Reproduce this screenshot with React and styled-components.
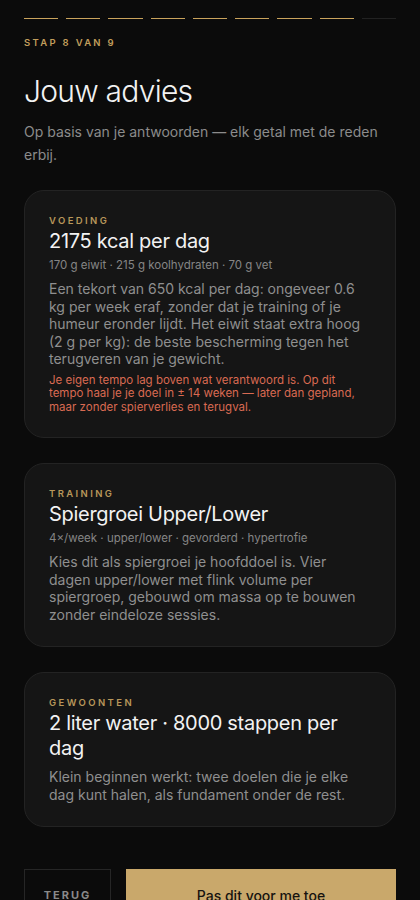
import styled, { createGlobalStyle } from "styled-components";

const GlobalStyle = createGlobalStyle`
  * { box-sizing: border-box; }
  body {
    margin: 0;
    background: #0b0b0b;
    font-family: Inter, "Noto Sans", "Liberation Sans", sans-serif;
    color: #f0f0f0;
  }
`;

const Page = styled.div`
  padding: 18px 24px 0;
  min-height: 900px;
`;

const Progress = styled.div`
  display: flex;
  gap: 8px;
`;

const Segment = styled.div`
  flex: 1;
  height: 1px;
  background: ${(props) => (props.done ? "#c9a35c" : "#222")};
`;

const StepLabel = styled.div`
  margin-top: 17px;
  font-size: 9.5px;
  line-height: 14px;
  font-weight: 600;
  letter-spacing: 2.3px;
  color: #c29e5c;
`;

const Title = styled.h1`
  margin: 23px 0 0;
  font-size: 30px;
  line-height: 36px;
  font-weight: 300;
  letter-spacing: -0.025em;
  color: #f2f2f2;
`;

const Intro = styled.p`
  margin: 12px 0 0;
  font-size: 14px;
  line-height: 22.5px;
  color: #8c8c8c;
`;

const Cards = styled.div`
  margin-top: 24px;
  display: flex;
  flex-direction: column;
  gap: 25px;
`;

const Card = styled.section`
  background: #151515;
  border: 1px solid #232323;
  border-radius: 20px;
  padding: 23px 24px 23px;
`;

const Kicker = styled.div`
  font-size: 9.5px;
  line-height: 14px;
  font-weight: 600;
  letter-spacing: 2.4px;
  color: #b8975a;
`;

const CardTitle = styled.h2`
  margin: 1px 0 0;
  font-size: 20px;
  line-height: 25px;
  font-weight: 400;
  letter-spacing: -0.015em;
  color: #f2f2f2;
`;

const Meta = styled.div`
  margin-top: 3px;
  font-size: 11.5px;
  line-height: 16px;
  color: #858585;
`;

const Body = styled.p`
  margin: 7px 0 0;
  font-size: 14px;
  line-height: 17.5px;
  color: #8f8f8f;
`;

const Warning = styled.p`
  margin: 6px 0 0;
  font-size: 11.5px;
  line-height: 13.6px;
  color: #d96a52;
`;

const Actions = styled.div`
  margin-top: 42px;
  display: flex;
  gap: 15px;
`;

const BackButton = styled.button`
  width: 87px;
  height: 52px;
  background: transparent;
  border: 1px solid #262626;
  color: #8a8a8a;
  font-family: inherit;
  font-size: 11px;
  font-weight: 700;
  letter-spacing: 2px;
  cursor: pointer;
`;

const PrimaryButton = styled.button`
  flex: 1;
  height: 52px;
  background: #c9a86b;
  border: none;
  color: #161310;
  font-family: inherit;
  font-size: 14px;
  font-weight: 500;
  cursor: pointer;
`;

const cards = [
  {
    kicker: "VOEDING",
    title: "2175 kcal per dag",
    meta: "170 g eiwit · 215 g koolhydraten · 70 g vet",
    body:
      "Een tekort van 650 kcal per dag: ongeveer 0.6 kg per week eraf, zonder dat je training of je humeur eronder lijdt. Het eiwit staat extra hoog (2 g per kg): de beste bescherming tegen het terugveren van je gewicht.",
    warning:
      "Je eigen tempo lag boven wat verantwoord is. Op dit tempo haal je je doel in ± 14 weken — later dan gepland, maar zonder spierverlies en terugval.",
  },
  {
    kicker: "TRAINING",
    title: "Spiergroei Upper/Lower",
    meta: "4×/week · upper/lower · gevorderd · hypertrofie",
    body:
      "Kies dit als spiergroei je hoofddoel is. Vier dagen upper/lower met flink volume per spiergroep, gebouwd om massa op te bouwen zonder eindeloze sessies.",
  },
  {
    kicker: "GEWOONTEN",
    title: "2 liter water · 8000 stappen per dag",
    body:
      "Klein beginnen werkt: twee doelen die je elke dag kunt halen, als fundament onder de rest.",
  },
];

const App = () => {
  const step = 8;
  const total = 9;

  return (
    <Page>
      <GlobalStyle />
      <Progress>
        {Array.from({ length: total }).map((_, i) => (
          <Segment key={i} done={i < step} />
        ))}
      </Progress>
      <StepLabel>
        STAP {step} VAN {total}
      </StepLabel>
      <Title>Jouw advies</Title>
      <Intro>Op basis van je antwoorden — elk getal met de reden erbij.</Intro>
      <Cards>
        {cards.map((c) => (
          <Card key={c.kicker}>
            <Kicker>{c.kicker}</Kicker>
            <CardTitle>{c.title}</CardTitle>
            {c.meta && <Meta>{c.meta}</Meta>}
            <Body>{c.body}</Body>
            {c.warning && <Warning>{c.warning}</Warning>}
          </Card>
        ))}
      </Cards>
      <Actions>
        <BackButton>TERUG</BackButton>
        <PrimaryButton>Pas dit voor me toe</PrimaryButton>
      </Actions>
    </Page>
  );
};

export default App;
